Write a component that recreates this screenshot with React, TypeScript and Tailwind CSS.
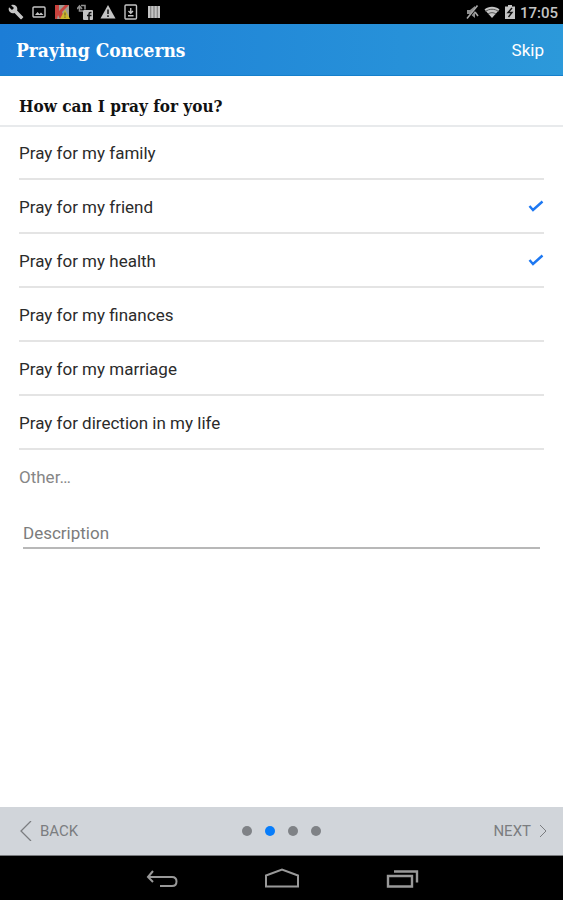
import { useState } from "react";

const topics = [
  "Pray for my family",
  "Pray for my friend",
  "Pray for my health",
  "Pray for my finances",
  "Pray for my marriage",
  "Pray for direction in my life",
];

const serif = "font-['DejaVu_Serif_Condensed','DejaVu_Serif',serif] font-bold";

function StatusBar() {
  return (
    <div className="flex h-6 items-center justify-between bg-black pl-2 pr-[5px] text-[#c4c4c4]">
      <div className="flex items-center gap-[7px]">
        <svg className="size-4" viewBox="0 0 24 24" fill="currentColor" aria-hidden="true">
          <path d="M22.7 19l-9.1-9.1c.9-2.3.4-5-1.5-6.9-2-2-5-2.4-7.4-1.3L9 6 6 9 1.6 4.7C.4 7.1.9 10.1 2.9 12.1c1.9 1.9 4.6 2.4 6.9 1.5l9.1 9.1c.4.4 1 .4 1.4 0l2.3-2.3c.5-.4.5-1.1.1-1.4z" />
        </svg>
        <svg className="size-4" viewBox="0 0 16 16" aria-hidden="true">
          <rect x="2" y="3" width="12" height="10" rx="1" fill="none" stroke="currentColor" strokeWidth="1.4" />
          <path d="M4 11l2.5-3 2 2 1.5-1.5L12.5 11z" fill="currentColor" />
        </svg>
        <svg className="size-4" viewBox="0 0 16 16" aria-hidden="true">
          <path d="M1 1h14v14H1z" fill="#9f9c94" />
          <path d="M1 1h4v6l6-6h4L8 8l3 7H6L4 11l-1 4H1z" fill="#c9423d" />
          <path d="M11 5.5L16 15H6z" fill="#cbb52d" />
          <path d="M11 8.5v3M11 12.5v1.300" stroke="#6b6130" strokeWidth="1.2" />
        </svg>
        <svg className="size-4" viewBox="0 0 16 16" aria-hidden="true">
          <path d="M0 5l2.500-3L5 5M2.500 3v4H6M4 1.500h4v4" fill="none" stroke="#909090" strokeWidth="1.6" />
          <rect x="6" y="6" width="10" height="10" rx="1" fill="currentColor" />
          <path d="M14.500 8.500h-1c-1 0-1.500.5-1.500 1.500v6M10 11.500h4.500" fill="none" stroke="#111" strokeWidth="1.5" />
        </svg>
        <svg className="size-4" viewBox="0 0 16 16" aria-hidden="true">
          <path d="M8 1l7.500 13.500H.5z" fill="currentColor" />
          <path d="M8 5.500v4.500M8 11.300v1.700" stroke="#111" strokeWidth="1.5" />
        </svg>
        <svg className="size-4" viewBox="0 0 16 16" fill="none" stroke="currentColor" strokeWidth="1.4" aria-hidden="true">
          <rect x="2" y="1" width="11.500" height="14" rx="1" />
          <path d="M7.750 4v5M5.500 7l2.250 2.300L10 7M5 11.800h5.500" />
        </svg>
        <svg className="size-4" viewBox="0 0 16 16" fill="currentColor" aria-hidden="true">
          <path d="M2 2h2.700v12H2zM5.100 2h2.700v12H5.100zM8.200 2h2.700v12H8.200zM11.300 2H14v12h-2.700z" />
        </svg>
      </div>
      <div className="flex items-center gap-1">
        <svg className="size-4" viewBox="0 0 16 16" aria-hidden="true">
          <path d="M3 6h3l5-4v12l-5-4H3z" fill="#8f8f8f" />
          <path d="M14 1.500L4 14.500" stroke="#000" strokeWidth="2" />
          <path d="M13.500 1.500L3 14.500M11 8l3 4" stroke="#a8a8a8" strokeWidth="1.6" />
        </svg>
        <svg className="size-4" viewBox="0 0 16 16" aria-hidden="true">
          <path d="M8 14L.5 5.500C4.500 1.800 11.500 1.800 15.500 5.500z" fill="currentColor" />
          <path d="M1.500 7.500C5 4.500 11 4.500 14.500 7.500M4 10c2.300-1.800 5.700-1.800 8 0" fill="none" stroke="#555" strokeWidth="1" />
        </svg>
        <svg className="h-4 w-3" viewBox="0 0 12 16" aria-hidden="true">
          <path d="M4 1h4v1.500h3V15H1V2.500h3z" fill="currentColor" />
          <path d="M8 4L4 8.500h4L4.500 13" fill="none" stroke="#111" strokeWidth="1.4" />
        </svg>
        <span className="pt-0.5 text-[15px] font-medium leading-6">17:05</span>
      </div>
    </div>
  );
}

function Topic({ label, checked, onChange }: { label: string; checked: boolean; onChange: () => void }) {
  return (
    <li className="border-b-2 border-[#e4e4e4]">
      <label className="flex h-[52px] cursor-pointer items-center justify-between text-[#2b2b2b]">
        <span className="pt-1">{label}</span>
        <span className="grid size-4 place-items-center">
          <input type="checkbox" checked={checked} onChange={onChange} className="peer col-start-1 row-start-1 size-4 appearance-none" />
          <svg className="pointer-events-none invisible col-start-1 row-start-1 size-4 peer-checked:visible" viewBox="0 0 16 16" fill="none" stroke="#1d78f2" strokeWidth="2.4" aria-hidden="true">
            <path d="M1.500 8l3.500 4L14.500 3.500" />
          </svg>
        </span>
      </label>
    </li>
  );
}

export default function App() {
  const [selected, setSelected] = useState<number[]>([1, 2]);
  const toggle = (i: number) =>
    setSelected((s) => (s.includes(i) ? s.filter((n) => n !== i) : [...s, i]));

  return (
    <div className="flex min-h-screen flex-col bg-white font-[Roboto,sans-serif] text-[17px]">
      <StatusBar />
      <header className="flex h-[52px] items-center justify-between border-b border-[#1580cc] bg-linear-to-r from-[#1c7dd6] to-[#2c99da] pl-4 pr-[19px] pt-0.5 text-white">
        <h1 className={`${serif} text-[19px]`}>Praying Concerns</h1>
        <button type="button">Skip</button>
      </header>
      <main className="grow">
        <h2 className={`${serif} h-[51px] border-b-2 border-[#e8eaec] px-[19px] pt-[18px] text-[17px] text-[#111]`}>
          How can I pray for you?
        </h2>
        <div className="-mt-px px-[19px]">
          <ul>
            {topics.map((t, i) => (
              <Topic key={t} label={t} checked={selected.includes(i)} onChange={() => toggle(i)} />
            ))}
          </ul>
          <input type="text" aria-label="Other" placeholder="Other…" className="block h-[52px] w-full pt-0.5 outline-none placeholder:text-[#868686]" />
          <div className="px-1 pt-3">
            <input type="text" aria-label="Description" placeholder="Description" className="block h-[35px] w-full border-b-2 border-[#b8b8b8] pb-1 pt-2 outline-none placeholder:text-[#7c7c7c]" />
          </div>
        </div>
      </main>
      <footer className="flex h-[49px] items-center justify-between border-b border-[#77797c] bg-[#d1d5da] px-4 text-[15px] text-[#7b7d80]">
        <button type="button" className="flex w-24 items-center gap-2 pl-1">
          <svg className="h-5 w-3" viewBox="0 0 12 20" fill="none" stroke="currentColor" strokeWidth="1.3" aria-hidden="true">
            <path d="M11 0L1 10l10 10" />
          </svg>
          BACK
        </button>
        <div className="flex gap-[13px]">
          {[0, 1, 2, 3].map((n) => (
            <span key={n} className={`size-[10px] rounded-full ${n === 1 ? "bg-[#087dfa]" : "bg-[#7f8286]"}`} />
          ))}
        </div>
        <button type="button" className="flex w-24 items-center justify-end gap-2">
          NEXT
          <svg className="h-3 w-2" viewBox="0 0 8 12" fill="none" stroke="currentColor" aria-hidden="true">
            <path d="M1 0l6 6-6 6" />
          </svg>
        </button>
      </footer>
      <nav className="flex h-11 items-center justify-center gap-[86px] bg-black text-[#999]">
        <button type="button" aria-label="Back">
          <svg className="h-6 w-9" viewBox="0 0 36 24" fill="none" stroke="currentColor" strokeWidth="2" aria-hidden="true">
            <path d="M11 5L6 11l5 5M6 11h24q4.500 0 4.500 4.500T30 20H18" />
          </svg>
        </button>
        <button type="button" aria-label="Home">
          <svg className="h-6 w-9" viewBox="0 0 36 24" fill="none" stroke="currentColor" strokeWidth="2" aria-hidden="true">
            <path d="M2 20.500V9.500L18 3.500l16 6v11z" />
          </svg>
        </button>
        <button type="button" aria-label="Recent apps">
          <svg className="h-6 w-9" viewBox="0 0 36 24" fill="none" stroke="currentColor" strokeWidth="2.400" aria-hidden="true">
            <path d="M2 10h24v10.500H2zM8 5.500h23v11" />
          </svg>
        </button>
      </nav>
    </div>
  );
}
